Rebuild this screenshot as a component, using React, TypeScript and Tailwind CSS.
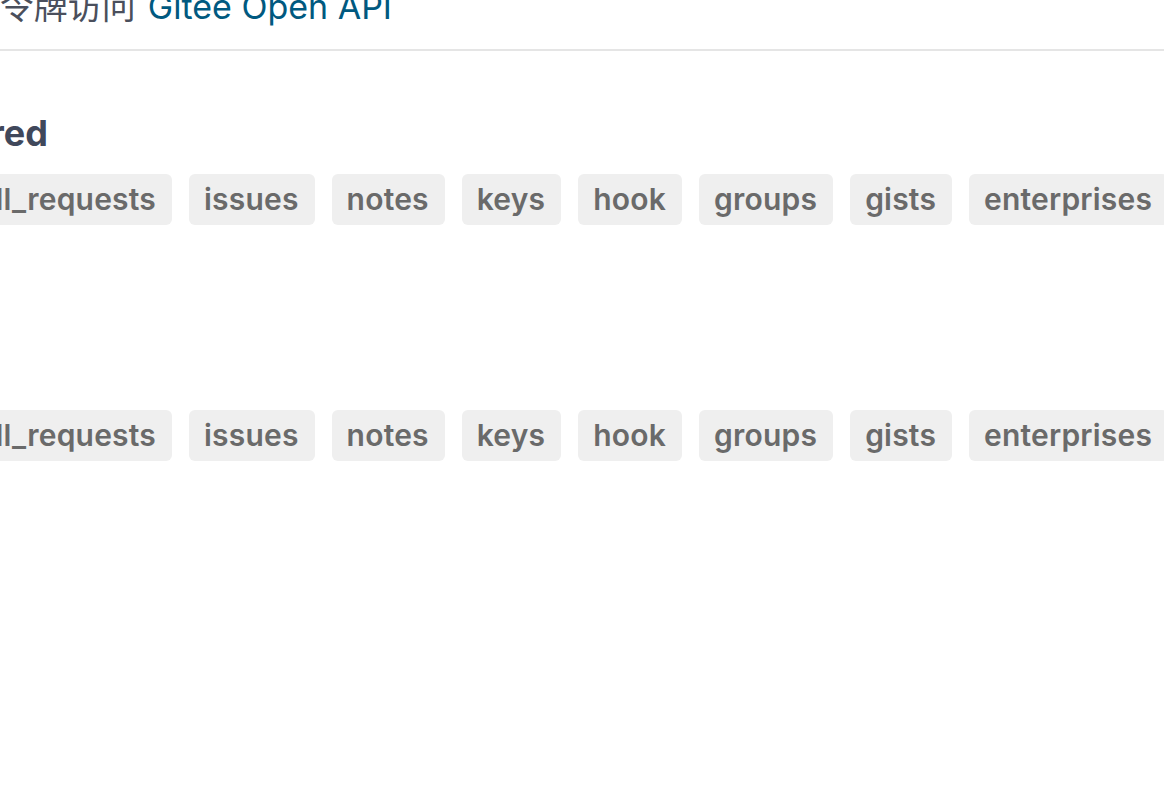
import React from 'react';

const hidden = ['projects', 'pull_requests'];
const tags = ['issues', 'notes', 'keys', 'hook', 'groups', 'gists', 'enterprises', 'emails'];

const Tag: React.FC<{ name: string }> = ({ name }) => (
  <span className="shrink-0 h-[51px] pl-[15px] pr-[16px] flex items-center rounded-[6px] bg-[#efefef] text-[#6a6a6a] text-[30px] font-semibold tracking-[0.2px] whitespace-nowrap">
    {name}
  </span>
);

const TagRow: React.FC = () => (
  <div className="flex items-center gap-[17px]">
    <div className="shrink-0 w-[172px] flex justify-end gap-[17px]">
      {hidden.map((t) => (
        <Tag key={t} name={t} />
      ))}
    </div>
    {tags.map((t) => (
      <Tag key={t} name={t} />
    ))}
  </div>
);

const App: React.FC = () => {
  return (
    <div
      className="w-[1164px] h-[806px] overflow-hidden bg-white"
      style={{ fontFamily: 'Inter, "Noto Sans CJK SC", sans-serif' }}
    >
      <div className="-mt-[35px] flex flex-col">
        <div className="h-[86px] border-b-2 border-[#e5e5e5] flex items-center">
          <div className="shrink-0 w-[392px] flex items-baseline justify-end whitespace-nowrap leading-none">
            <span className="text-[34px] text-[#4a4f5c]">使用个人访问令牌访问</span>
            <span className="text-[34px] text-[#005980] ml-[12px]">Gitee Open API</span>
          </div>
        </div>

        <div className="mt-[62px] w-[48px] flex justify-end">
          <h2 className="whitespace-nowrap text-[36px] leading-[40px] font-bold text-[#40485b]">
            Scopes required
          </h2>
        </div>

        <div className="mt-[21px]">
          <TagRow />
        </div>

        <div className="h-[185px]" />

        <TagRow />
      </div>
    </div>
  );
};

export default App;
